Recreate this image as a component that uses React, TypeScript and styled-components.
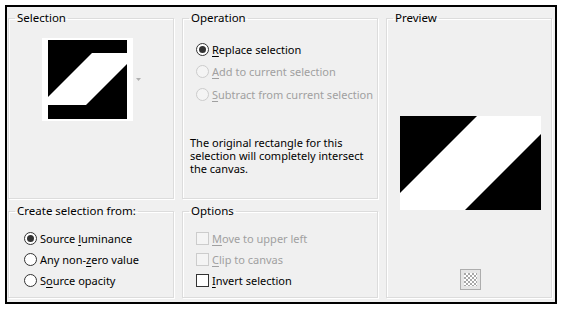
import React from "react";
import styled, { createGlobalStyle } from "styled-components";

const Global = createGlobalStyle`
  html, body { margin: 0; padding: 0; background: #ffffff; }
  body { font-family: "Noto Sans", "Open Sans", sans-serif; font-size: 11px; color: #000; }
`;

const Frame = styled.div`
  margin: 5px;
  width: 546px;
  border: 2px solid #000;
  background: #f0f0f0;
  padding: 4px 1px;
  display: grid;
  grid-template-columns: 166px 196px 166px;
  grid-template-rows: 188px 94px;
  column-gap: 8px;
  row-gap: 5px;
  box-sizing: content-box;
`;

const Group = styled.fieldset<{ $col: number; $row: string }>`
  margin: 0;
  padding: 0;
  min-width: 0;
  border: 1px solid #dcdcdc;
  box-shadow: inset 1px 1px 0 #ffffff, 1px 1px 0 #ffffff;
  grid-column: ${(p) => p.$col};
  grid-row: ${(p) => p.$row};
  display: flex;
  flex-direction: column;
  box-sizing: border-box;
`;

const Legend = styled.legend`
  margin-left: 6px;
  padding: 0 2px;
  line-height: 14px;
  font-size: 11.5px;
`;

const Thumb = styled.div`
  display: flex;
  align-items: center;
  margin: 13px 0 0 33px;
  gap: 3px;
`;

const ThumbFrame = styled.div`
  background: #ffffff;
  padding: 2px 6px;
  display: flex;
`;

const RadioList = styled.div<{ $top: number; $left: number; $row: number }>`
  display: flex;
  flex-direction: column;
  padding: ${(p) => p.$top}px 0 0 ${(p) => p.$left}px;
  & > * { height: ${(p) => p.$row}px; }
`;

const Option = styled.label<{ $disabled?: boolean }>`
  display: flex;
  align-items: center;
  gap: 3px;
  color: ${(p) => (p.$disabled ? "#a0a0a0" : "#000")};
  white-space: nowrap;
  & u { text-decoration: underline; text-underline-offset: 2px; }
`;

const RadioDot = styled.span<{ $checked?: boolean; $disabled?: boolean }>`
  width: 13px;
  height: 13px;
  border-radius: 50%;
  box-sizing: border-box;
  border: 1px solid ${(p) => (p.$disabled ? "#cccccc" : "#333333")};
  background: ${(p) => (p.$disabled ? "#f4f4f4" : "#ffffff")};
  display: flex;
  align-items: center;
  justify-content: center;
  flex: none;
  &::after {
    content: "";
    display: ${(p) => (p.$checked ? "block" : "none")};
    width: 7px;
    height: 7px;
    border-radius: 50%;
    background: #333333;
  }
`;

const CheckBox = styled.span<{ $disabled?: boolean }>`
  width: 13px;
  height: 13px;
  box-sizing: border-box;
  border: 1px solid ${(p) => (p.$disabled ? "#cccccc" : "#333333")};
  background: ${(p) => (p.$disabled ? "#f4f4f4" : "#ffffff")};
  flex: none;
`;

const Note = styled.p`
  margin: 30px 0 0 7px;
  line-height: 13px;
  width: 175px;
`;

const PreviewImg = styled.div`
  margin: 91px 0 0 13px;
  display: flex;
`;

const CheckerBtn = styled.div`
  margin: 59px 0 0 73px;
  display: flex;
`;

export default function App() {
  return (
    <>
      <Global />
      <Frame>
        <Group $col={1} $row="1">
          <Legend>Selection</Legend>
          <Thumb>
            <ThumbFrame>
              <svg width="79" height="79" viewBox="0 0 79 79">
                <rect width="79" height="79" fill="#000" />
                <polygon points="44,13 79,13 79,24 38,65 0,65 0,57" fill="#fff" />
              </svg>
            </ThumbFrame>
            <svg width="5" height="3" viewBox="0 0 5 3">
              <polygon points="0,0 5,0 2.5,3" fill="#b0b0b0" />
            </svg>
          </Thumb>
        </Group>
        <Group $col={2} $row="1">
          <Legend>Operation</Legend>
          <RadioList $top={13} $left={13} $row={22.5}>
            <Option>
              <RadioDot $checked />
              <span><u>R</u>eplace selection</span>
            </Option>
            <Option $disabled>
              <RadioDot $disabled />
              <span><u>A</u>dd to current selection</span>
            </Option>
            <Option $disabled>
              <RadioDot $disabled />
              <span><u>S</u>ubtract from current selection</span>
            </Option>
          </RadioList>
          <Note>
            The original rectangle for this selection will completely intersect the canvas.
          </Note>
        </Group>
        <Group $col={3} $row="1 / span 2">
          <Legend>Preview</Legend>
          <PreviewImg>
            <svg width="141" height="94" viewBox="0 0 141 94">
              <rect width="141" height="94" fill="#fff" />
              <polygon points="0,0 77,0 0,77" fill="#000" />
              <polygon points="141,18 141,94 65,94" fill="#000" />
            </svg>
          </PreviewImg>
          <CheckerBtn>
            <svg width="21" height="21" viewBox="0 0 21 21">
              <rect x="0.5" y="0.5" width="20" height="20" fill="#e5e5e5" stroke="#adadad" />
              <defs>
                <pattern id="chk" width="4" height="4" patternUnits="userSpaceOnUse" x="4" y="4">
                  <rect width="4" height="4" fill="#ffffff" />
                  <rect width="2" height="2" fill="#a8a8a8" />
                  <rect x="2" y="2" width="2" height="2" fill="#a8a8a8" />
                </pattern>
              </defs>
              <rect x="4" y="4" width="13" height="13" fill="url(#chk)" />
            </svg>
          </CheckerBtn>
        </Group>
        <Group $col={1} $row="2">
          <Legend>Create selection from:</Legend>
          <RadioList $top={10} $left={15} $row={21}>
            <Option>
              <RadioDot $checked />
              <span>Source <u>l</u>uminance</span>
            </Option>
            <Option>
              <RadioDot />
              <span>Any non-<u>z</u>ero value</span>
            </Option>
            <Option>
              <RadioDot />
              <span>S<u>o</u>urce opacity</span>
            </Option>
          </RadioList>
        </Group>
        <Group $col={2} $row="2">
          <Legend>Options</Legend>
          <RadioList $top={10} $left={13} $row={21}>
            <Option $disabled>
              <CheckBox $disabled />
              <span><u>M</u>ove to upper left</span>
            </Option>
            <Option $disabled>
              <CheckBox $disabled />
              <span><u>C</u>lip to canvas</span>
            </Option>
            <Option>
              <CheckBox />
              <span><u>I</u>nvert selection</span>
            </Option>
          </RadioList>
        </Group>
      </Frame>
    </>
  );
}
